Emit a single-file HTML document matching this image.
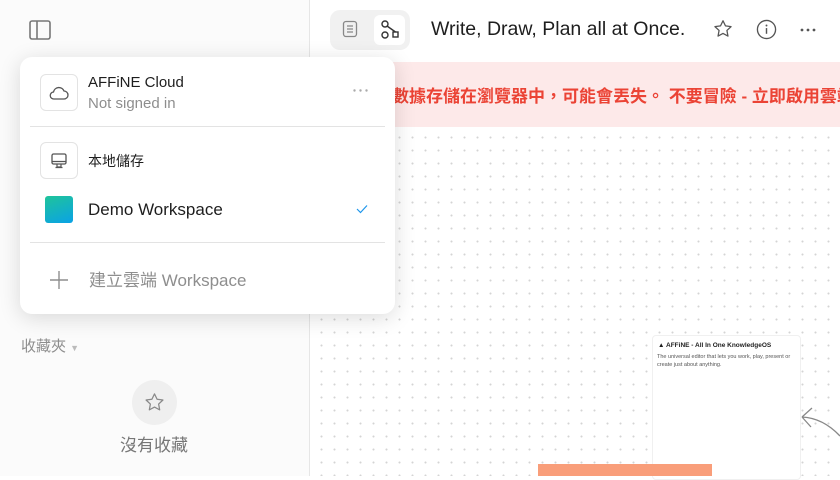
<!DOCTYPE html>
<html><head><meta charset="utf-8"><style>
*{box-sizing:border-box;margin:0;padding:0}
body{width:840px;height:476px;overflow:hidden;position:relative;background:#fff;font-family:"Liberation Sans","Noto Sans CJK TC",sans-serif;color:#1e1e1e}
.side{position:absolute;left:0;top:0;width:310px;height:476px;background:#fbfbfb;border-right:1px solid #e6e6e6}
.canvas{position:absolute;left:311px;top:127px;right:0;bottom:0;background-color:#fff;background-image:radial-gradient(circle,#d4d4d4 0.8px,transparent 1.2px);background-size:13px 13px;background-position:4px 4px}
.banner{position:absolute;left:311px;top:62px;right:0;height:65px;background:#fde9e9;overflow:hidden}
.banner span{position:absolute;left:64px;top:20px;white-space:nowrap;color:#eb4335;font-weight:bold;font-size:17px}
.pop{position:absolute;left:20px;top:57px;width:375px;height:257px;background:#fff;border-radius:12px;box-shadow:0 4px 22px rgba(0,0,0,.14)}
.ib{position:absolute;width:38px;height:37px;border:1px solid #e3e3e3;border-radius:6px;display:flex;align-items:center;justify-content:center}
.t{position:absolute;white-space:nowrap}
</style></head><body>
<div class="side">
 <svg style="position:absolute;left:29px;top:20px" width="22" height="20" viewBox="0 0 22 20"><rect x="1" y="1" width="20" height="18" rx="2" fill="none" stroke="#777" stroke-width="1.6"/><line x1="8" y1="1" x2="8" y2="19" stroke="#777" stroke-width="1.6"/></svg>
 <div class="t" style="left:21px;top:335px;font-size:15px;color:#8e8e8e">收藏夾 <span style="font-size:9px;color:#bbb">▼</span></div>
 <div style="position:absolute;left:132px;top:380px;width:45px;height:45px;border-radius:50%;background:#efefef"></div>
 <svg style="position:absolute;left:143px;top:391px" width="23" height="23" viewBox="0 0 24 24"><path d="M12 3l2.7 5.6 6.1.8-4.5 4.2 1.1 6.1L12 16.8 6.6 19.7l1.1-6.1L3.2 9.4l6.1-.8z" fill="none" stroke="#888" stroke-width="1.3" stroke-linejoin="round"/></svg>
 <div class="t" style="left:120px;top:431px;font-size:17px;color:#777">沒有收藏</div>
</div>
<div class="canvas"></div>
<div style="position:absolute;left:652px;top:335px;width:149px;height:145px;background:#fff;border:1px solid #f0f0f0;border-radius:4px">
 <div class="t" style="left:5px;top:6px;font-size:6.5px;font-weight:bold">▲ AFFiNE - All In One KnowledgeOS</div>
 <div class="t" style="left:4px;top:17px;font-size:5.5px;color:#555;line-height:8px;white-space:normal;width:140px">The universal editor that lets you work, play, present or create just about anything.</div>
</div>
<svg style="position:absolute;left:798px;top:400px" width="42" height="40"><path d="M42 36 Q25 18 4 17 M4 17 L14 8 M4 17 L13 27" fill="none" stroke="#888" stroke-width="1.3"/></svg>
<div style="position:absolute;left:538px;top:464px;width:174px;height:12px;background:#f99e7a"></div>
<div class="banner"><span>地數據存儲在瀏覽器中，可能會丟失。 不要冒險 - 立即啟用雲端同步</span></div>
<div style="position:absolute;left:330px;top:10px;width:80px;height:40px;background:#f1f1f1;border-radius:10px"></div>
<div style="position:absolute;left:374px;top:15px;width:31px;height:30px;background:#fff;border-radius:6px"></div>
<svg style="position:absolute;left:342px;top:20px" width="16" height="18" viewBox="0 0 16 18"><rect x="1.5" y="1.5" width="13" height="15" rx="2.5" fill="none" stroke="#888" stroke-width="1.3"/><path d="M5 6h6M5 9h6M5 12h6" stroke="#888" stroke-width="1.2"/></svg>
<svg style="position:absolute;left:379px;top:19px" width="22" height="22" viewBox="0 0 22 22"><circle cx="6" cy="5" r="3" fill="none" stroke="#333" stroke-width="1.4"/><circle cx="6" cy="16" r="3" fill="none" stroke="#333" stroke-width="1.4"/><rect x="14" y="13" width="5" height="5" fill="none" stroke="#333" stroke-width="1.4"/><path d="M8 7 L16.5 13" fill="none" stroke="#333" stroke-width="1.4"/></svg>
<div class="t" style="left:431px;top:18px;font-size:19.5px;color:#1e1e1e">Write, Draw, Plan all at Once.</div>
<svg style="position:absolute;left:712px;top:18px" width="22" height="22" viewBox="0 0 24 24"><path d="M12 3l2.7 5.6 6.1.8-4.5 4.2 1.1 6.1L12 16.8 6.6 19.7l1.1-6.1L3.2 9.4l6.1-.8z" fill="none" stroke="#555" stroke-width="1.4" stroke-linejoin="round"/></svg>
<svg style="position:absolute;left:756px;top:19px" width="21" height="21" viewBox="0 0 22 22"><circle cx="11" cy="11" r="9.5" fill="none" stroke="#555" stroke-width="1.4"/><circle cx="11" cy="6.8" r="1" fill="#555"/><path d="M11 9.5v6" stroke="#555" stroke-width="1.5"/></svg>
<svg style="position:absolute;left:799px;top:27px" width="18" height="6"><circle cx="3" cy="3" r="1.4" fill="#555"/><circle cx="9" cy="3" r="1.4" fill="#555"/><circle cx="15" cy="3" r="1.4" fill="#555"/></svg>
<div class="pop">
 <div class="ib" style="left:20px;top:17px"><svg width="20" height="16" viewBox="0 0 20 16"><path d="M5 14h10a4 4 0 0 0 0-8 5.5 5.5 0 0 0-10.5 1A3.5 3.5 0 0 0 5 14z" fill="none" stroke="#555" stroke-width="1.3"/></svg></div>
 <div class="t" style="left:68px;top:17px;font-size:15px;color:#1e1e1e">AFFiNE Cloud</div>
 <div class="t" style="left:68px;top:38px;font-size:15px;color:#8e8e8e">Not signed in</div>
 <svg style="position:absolute;left:332px;top:31px" width="18" height="5"><circle cx="2.5" cy="2.5" r="1.2" fill="#aaa"/><circle cx="8.5" cy="2.5" r="1.2" fill="#aaa"/><circle cx="14.5" cy="2.5" r="1.2" fill="#aaa"/></svg>
 <div style="position:absolute;left:10px;right:10px;top:69px;height:1px;background:#e3e3e3"></div>
 <div class="ib" style="left:20px;top:85px"><svg width="18" height="18" viewBox="0 0 18 18"><rect x="2" y="2" width="14" height="10" rx="1.5" fill="none" stroke="#555" stroke-width="1.3"/><path d="M2 9.5h14M7 12v3h4v-3M5.5 15.5h7" fill="none" stroke="#555" stroke-width="1.2"/></svg></div>
 <div class="t" style="left:68px;top:94px;font-size:14px;color:#1e1e1e">本地儲存</div>
 <div style="position:absolute;left:25px;top:139px;width:28px;height:27px;border-radius:3px;background:linear-gradient(160deg,#1fc49a,#0aa2e6)"></div>
 <div class="t" style="left:68px;top:143px;font-size:17px;color:#1e1e1e">Demo Workspace</div>
 <svg style="position:absolute;left:336px;top:147px" width="12" height="10"><path d="M1 5l3.5 3.5L11 1.5" fill="none" stroke="#1e96eb" stroke-width="1.2"/></svg>
 <div style="position:absolute;left:10px;right:10px;top:185px;height:1px;background:#e3e3e3"></div>
 <svg style="position:absolute;left:29px;top:213px" width="20" height="20"><path d="M10 1v18M1 10h18" stroke="#8e8e8e" stroke-width="1.4"/></svg>
 <div class="t" style="left:69px;top:209px;font-size:17px;color:#8e8e8e">建立雲端 Workspace</div>
</div>
</body></html>
